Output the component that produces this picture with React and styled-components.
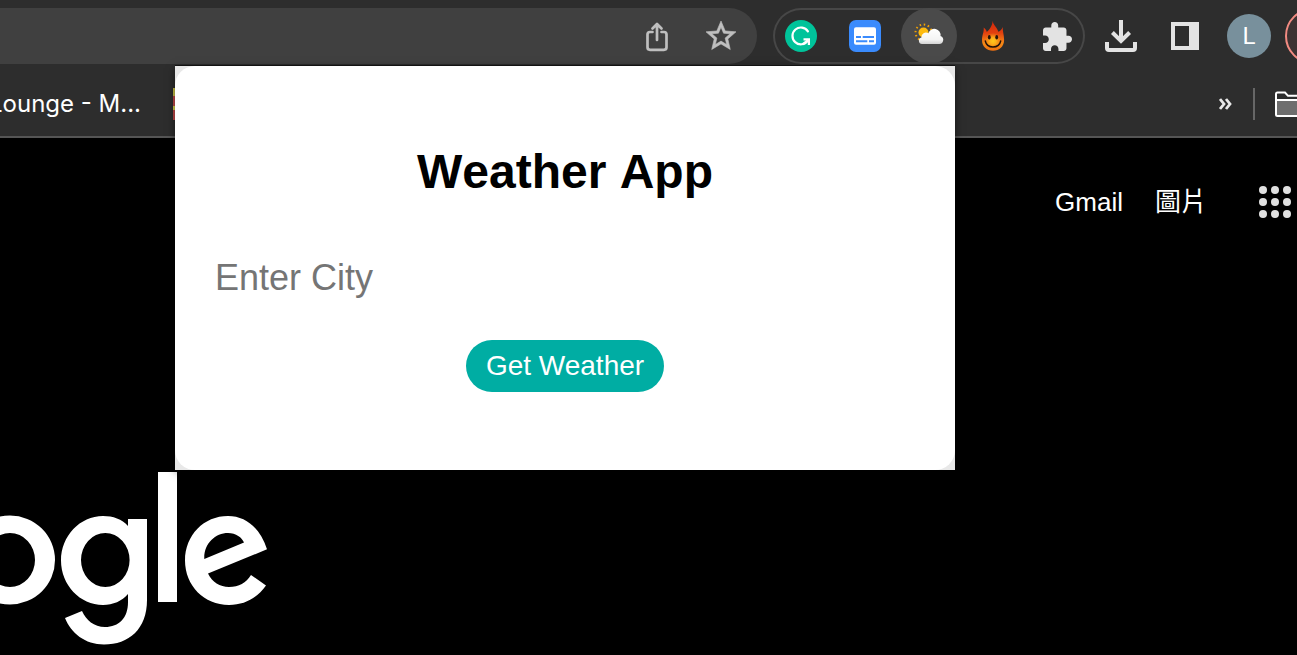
import React from "react";
import styled, { createGlobalStyle } from "styled-components";

const GlobalStyle = createGlobalStyle`
  * { box-sizing: border-box; }
  body {
    margin: 0;
    background: #000;
    font-family: "Liberation Sans", Arial, sans-serif;
  }
  button { border: 0; padding: 0; background: none; font: inherit; cursor: pointer; }
  a { color: inherit; text-decoration: none; }
  svg { display: block; flex: none; }
`;

const Browser = styled.div`
  position: relative;
  min-height: 100vh;
  overflow: hidden;
`;

const Toolbar = styled.header`
  display: flex;
  align-items: center;
  gap: 8px;
  padding-top: 8px;
  background: #2d2d2d;
`;

const AddressBar = styled.div`
  flex: 1;
  min-width: 0;
  display: flex;
  justify-content: flex-end;
  gap: 8px;
  margin-right: 8px;
  padding-right: 8px;
  border-radius: 0 28px 28px 0;
  background: #404040;
`;

const ExtensionTray = styled.div`
  display: flex;
  gap: 8px;
  border-radius: 28px;
  box-shadow: inset 0 0 0 2px #474747;
`;

const IconButton = styled.button`
  flex: none;
  display: flex;
  align-items: center;
  justify-content: center;
  width: 56px;
  height: 56px;
  border-radius: 50%;
  background: ${(p) => (p.$active ? "#4a4a4a" : "transparent")};
  color: ${(p) => (p.$muted ? "#bfbfbf" : "#e3e3e3")};
`;

const Avatar = styled.span`
  display: flex;
  align-items: center;
  justify-content: center;
  width: 44px;
  height: 44px;
  border-radius: 50%;
  background: #78909c;
  color: #fff;
  font: 24px/28px Roboto, sans-serif;
`;

const UpdateSlot = styled.div`
  flex: none;
  width: 12px;
  height: 56px;
  overflow: hidden;
`;

const UpdateButton = styled.button`
  width: 160px;
  height: 56px;
  border: 2px solid #f28b82;
  border-radius: 28px;
  background: #3c3232;
`;

const BookmarksBar = styled.nav`
  display: flex;
  align-items: center;
  height: 74px;
  padding-top: 8px;
  border-bottom: 2px solid #555;
  background: #2d2d2d;
  color: #fff;
`;

const Bookmark = styled.a`
  flex: none;
  display: flex;
  justify-content: flex-end;
  width: 141px;
  overflow: hidden;
  white-space: nowrap;
  font: 24px/32px Inter, sans-serif;
`;

const Favicon = styled.a`
  width: 32px;
  height: 32px;
  margin-left: 32px;
  background: linear-gradient(#c9c247 0 25%, #c04848 25% 56%, #d6d24c 56% 70%, #c04848 70%);
`;

const BookmarkTools = styled.div`
  display: flex;
  align-items: center;
  gap: 20px;
  margin-left: auto;
`;

const Divider = styled.span`
  width: 2px;
  height: 32px;
  background: #666;
`;

const Page = styled.main`
  color: #fff;
`;

const PageNav = styled.nav`
  display: flex;
  align-items: center;
  justify-content: flex-end;
  gap: 32px;
  padding: 48px 6px 0 0;
  font: 26px/32px "Liberation Sans", "Noto Sans CJK TC", sans-serif;
`;

const AppsButton = styled.button`
  margin-left: 20px;
  color: #e0e0e0;
`;

const LogoRow = styled.div`
  padding-top: 253px;
`;

const Popup = styled.section`
  position: absolute;
  top: 66px;
  right: 342px;
  width: 780px;
  background: #e8e8e8;
  box-shadow: 0 -1px 0 rgba(0, 0, 0, 0.5), 0 2px 8px rgba(0, 0, 0, 0.5);
`;

const Card = styled.form`
  display: flex;
  flex-direction: column;
  align-items: center;
  padding: 78px 0;
  border-radius: 20px;
  background: #fff;
`;

const Title = styled.h1`
  margin: 0 0 48px;
  color: #000;
  font-size: 48px;
  font-kerning: none;
  line-height: 56px;
`;

const CityInput = styled.input`
  width: 100%;
  height: 60px;
  margin-bottom: 32px;
  padding: 0 40px;
  border: 0;
  outline: 0;
  background: transparent;
  color: #000;
  font: 36px "Liberation Sans", Arial, sans-serif;
  &::placeholder { color: #757575; opacity: 1; }
`;

const SubmitButton = styled.button`
  height: 52px;
  padding: 0 20px;
  border-radius: 26px;
  background: #00ada3;
  color: #fff;
  font-size: 28px;
  line-height: 52px;
`;

const ShareIcon = () => (
  <svg width="24" height="32" viewBox="0 0 24 32" fill="none" stroke="currentColor" strokeWidth="2.7" strokeLinecap="round" strokeLinejoin="round">
    <path d="M7.500 12H5a2.500 2.500 0 0 0-2.500 2.500v12.800A2.500 2.500 0 0 0 5 29.800h14a2.500 2.500 0 0 0 2.500-2.500V14.500A2.500 2.500 0 0 0 19 12h-2.500" />
    <path d="M12 20V4.500M7.500 8.500L12 4l4.500 4.500" />
  </svg>
);

const StarIcon = () => (
  <svg width="36" height="36" viewBox="0 0 24 24" fill="currentColor" stroke="currentColor" strokeWidth="0.4">
    <path d="M22 9.240l-7.190-.620L12 2 9.190 8.630 2 9.240l5.460 4.730L5.820 21 12 17.270 18.180 21l-1.630-7.030L22 9.240zM12 15.400l-3.760 2.270 1-4.280-3.320-2.880 4.380-.380L12 6.100l1.710 4.040 4.380.380-3.320 2.880 1 4.280L12 15.400z" />
  </svg>
);

const GrammarIcon = () => (
  <svg width="32" height="32" viewBox="0 0 32 32">
    <circle cx="16" cy="16" r="16" fill="#00c39a" />
    <g fill="none" stroke="#fff" strokeWidth="2.2">
      <path d="M22.900 11.300A8.400 8.400 0 1 0 22.700 20.800" strokeLinecap="round" />
      <path d="M18.500 19.300H23.900V25" />
      <path d="M17.800 24.300L23.500 19.500" />
    </g>
  </svg>
);

const SubtitlesIcon = () => (
  <svg width="32" height="32" viewBox="0 0 32 32">
    <rect width="32" height="32" rx="7" fill="#3a8bfd" />
    <rect x="5" y="7.3" width="22" height="17.4" rx="2" fill="#fff" />
    <path d="M7 17h5M13.700 17H25M7 21.300h11.300M20 21.300h5" stroke="#3a8bfd" strokeWidth="2" />
  </svg>
);

const WeatherIcon = () => (
  <svg width="32" height="32" viewBox="0 0 32 32">
    <defs>
      <linearGradient id="cloud" x1="0" y1="0" x2="0" y2="1">
        <stop offset="0" stopColor="#fff" />
        <stop offset=".7" stopColor="#f4f4f4" />
        <stop offset="1" stopColor="#d2d2d2" />
      </linearGradient>
    </defs>
    <circle cx="10.5" cy="12.5" r="5" fill="#fdbb10" />
    <circle cx="10.5" cy="12.5" r="8" fill="none" stroke="#f5a300" strokeWidth="2" strokeDasharray="1.5 2.689" />
    <path
      fill="url(#cloud)"
      d="M9 24a3.300 3.300 0 0 1-.6-6.500A4.600 4.600 0 0 1 15.400 13.300 6.200 6.200 0 0 1 27.500 15.900 4.200 4.200 0 0 1 25.500 24z"
    />
  </svg>
);

const FlameIcon = () => (
  <svg width="32" height="32" viewBox="0 0 32 32">
    <defs>
      <linearGradient id="flame" x1="0" y1="0" x2="0" y2="1">
        <stop offset="0" stopColor="#d0260c" />
        <stop offset=".4" stopColor="#e2400f" />
        <stop offset=".75" stopColor="#f58a16" />
        <stop offset="1" stopColor="#f07010" />
      </linearGradient>
      <radialGradient id="glow" cx=".5" cy=".5" r=".5">
        <stop offset="0" stopColor="#ffc81c" />
        <stop offset=".4" stopColor="#fdb018" />
        <stop offset="1" stopColor="#f58a16" stopOpacity="0" />
      </radialGradient>
    </defs>
    <path
      fill="url(#flame)"
      d="M15.600.7C16.200 5 20.200 7.200 21.300 11.800 23.600 11 25 9 25.800 7c-.4 4 1.300 7.500 1.300 13C27.100 26.400 22.500 30.700 16 30.700S5 26.400 5 20.300C5 15 7.200 12 6.700 7.500 8.300 8.700 9.300 10 9.800 12 12.500 9.500 15.500 5.500 15.600.7z"
    />
    <circle cx="16" cy="21" r="8" fill="url(#glow)" />
    <ellipse cx="12.3" cy="17.3" rx="1.4" ry="2.3" fill="#241208" />
    <ellipse cx="19.7" cy="17.3" rx="1.4" ry="2.3" fill="#241208" />
    <path d="M8.300 21c1.700 8 13.700 8 15.400 0" fill="none" stroke="#241208" strokeWidth="1.4" strokeLinecap="round" />
  </svg>
);

const PuzzleIcon = () => (
  <svg width="29" height="29" viewBox="2 1 21 21" fill="currentColor">
    <path d="M20.500 11H19V7c0-1.100-.9-2-2-2h-4V3.500C13 2.120 11.880 1 10.500 1S8 2.120 8 3.500V5H4c-1.100 0-1.990.9-1.990 2v3.800H3.500c1.490 0 2.700 1.210 2.700 2.700s-1.210 2.700-2.700 2.700H2V20c0 1.100.9 2 2 2h3.800v-1.500c0-1.490 1.210-2.700 2.700-2.700 1.490 0 2.700 1.210 2.700 2.700V22H17c1.100 0 2-.9 2-2v-4h1.500c1.380 0 2.500-1.120 2.500-2.500S21.880 11 20.500 11z" />
  </svg>
);

const DownloadIcon = () => (
  <svg width="32" height="32" viewBox="0 0 32 32" fill="none" stroke="currentColor" strokeWidth="4">
    <path d="M16 0V20M7.400 12.500L16 21l8.600-8.500" />
    <path d="M2 22v6a2 2 0 0 0 2 2h24a2 2 0 0 0 2-2v-6" />
  </svg>
);

const SidePanelIcon = () => (
  <svg width="28" height="28" viewBox="0 0 28 28" fill="currentColor">
    <path fillRule="evenodd" d="M0 0H28V28H0zM4 4V24H18V4z" />
  </svg>
);

const ChevronsIcon = () => (
  <svg width="14" height="12" viewBox="0 0 14 12" fill="none" stroke="#e8e8e8" strokeWidth="2.8">
    <path d="M1 1L5 6l-4 5M7 1L11 6l-4 5" />
  </svg>
);

const FolderIcon = () => (
  <svg width="22" height="26" viewBox="0 0 22 26">
    <path d="M1 9H22V25H1z" fill="#6e6e6e" />
    <path d="M22 4.800H13L10 1.500H2.500Q1 1.500 1 3V23.500Q1 25 2.500 25H22M1 9H22" fill="none" stroke="#fff" strokeWidth="2" />
  </svg>
);

const AppsIcon = () => (
  <svg width="32" height="32" viewBox="0 0 32 32" fill="currentColor">
    {[4, 16, 28].map((y) =>
      [4, 16, 28].map((x) => <circle key={`${x}-${y}`} cx={x} cy={y} r="4" />)
    )}
  </svg>
);

const GoogleLogo = () => (
  <svg width="268" height="174" viewBox="0 0 268 174" role="img" aria-label="Google" fill="#fff" fillRule="evenodd">
    <path d="M-35 89a45 44.500 0 1 1 90 0a45 44.500 0 1 1-90 0zM-15 89a25 27 0 1 0 50 0a25 27 0 1 0-50 0z" />
    <path d="M128 55V48H147V129C147 158 129 173.500 104 173.500C85 173.500 71 162 65 147L82 140C86 149 94 156 105 156C119 156 128 147 128 131V123C122 130 113 134 103 134C80 134 61 114 61 89.500C61 65 80 45 103 45C113 45 122 48 128 55zM81 89a24.300 27 0 1 0 48.600 0a24.300 27 0 1 0-48.600 0z" />
    <rect x="158" y="1" width="19" height="130" />
    <path d="M267 78.300L208 102.500C212 111 220 116 229 116C239 116 246 112 251 104L266 114.500C257 127 245 134 229 134C204 134 185 114.500 185 89.500C185 64 204 45 228 45C246 45 260 57 267 78.300zM204.300 88L244 71.500C242 66.500 236 62 228 62C215 62 203.500 73 204.300 88z" />
  </svg>
);

export default function App() {
  return (
    <Browser>
      <GlobalStyle />
      <Toolbar>
        <AddressBar>
          <IconButton $muted aria-label="Share"><ShareIcon /></IconButton>
          <IconButton $muted aria-label="Bookmark this page"><StarIcon /></IconButton>
        </AddressBar>
        <ExtensionTray>
          <IconButton aria-label="Grammar"><GrammarIcon /></IconButton>
          <IconButton aria-label="Subtitles"><SubtitlesIcon /></IconButton>
          <IconButton $active aria-label="Weather App"><WeatherIcon /></IconButton>
          <IconButton aria-label="Flame"><FlameIcon /></IconButton>
          <IconButton aria-label="Extensions"><PuzzleIcon /></IconButton>
        </ExtensionTray>
        <IconButton aria-label="Downloads"><DownloadIcon /></IconButton>
        <IconButton aria-label="Side panel"><SidePanelIcon /></IconButton>
        <IconButton aria-label="Profile"><Avatar>L</Avatar></IconButton>
        <UpdateSlot><UpdateButton aria-label="Update" /></UpdateSlot>
      </Toolbar>

      <BookmarksBar>
        <Bookmark href="#lounge">Lounge - M...</Bookmark>
        <Favicon href="#bookmark" aria-label="Bookmark" />
        <BookmarkTools>
          <button aria-label="More bookmarks"><ChevronsIcon /></button>
          <Divider />
          <button aria-label="All bookmarks"><FolderIcon /></button>
        </BookmarkTools>
      </BookmarksBar>

      <Page>
        <PageNav>
          <a href="#gmail">Gmail</a>
          <a href="#images" lang="zh-Hant">圖片</a>
          <AppsButton aria-label="Apps"><AppsIcon /></AppsButton>
        </PageNav>
        <LogoRow><GoogleLogo /></LogoRow>
      </Page>

      <Popup>
        <Card onSubmit={(e) => e.preventDefault()}>
          <Title>Weather App</Title>
          <CityInput type="text" placeholder="Enter City" aria-label="Enter City" />
          <SubmitButton type="submit">Get Weather</SubmitButton>
        </Card>
      </Popup>
    </Browser>
  );
}
